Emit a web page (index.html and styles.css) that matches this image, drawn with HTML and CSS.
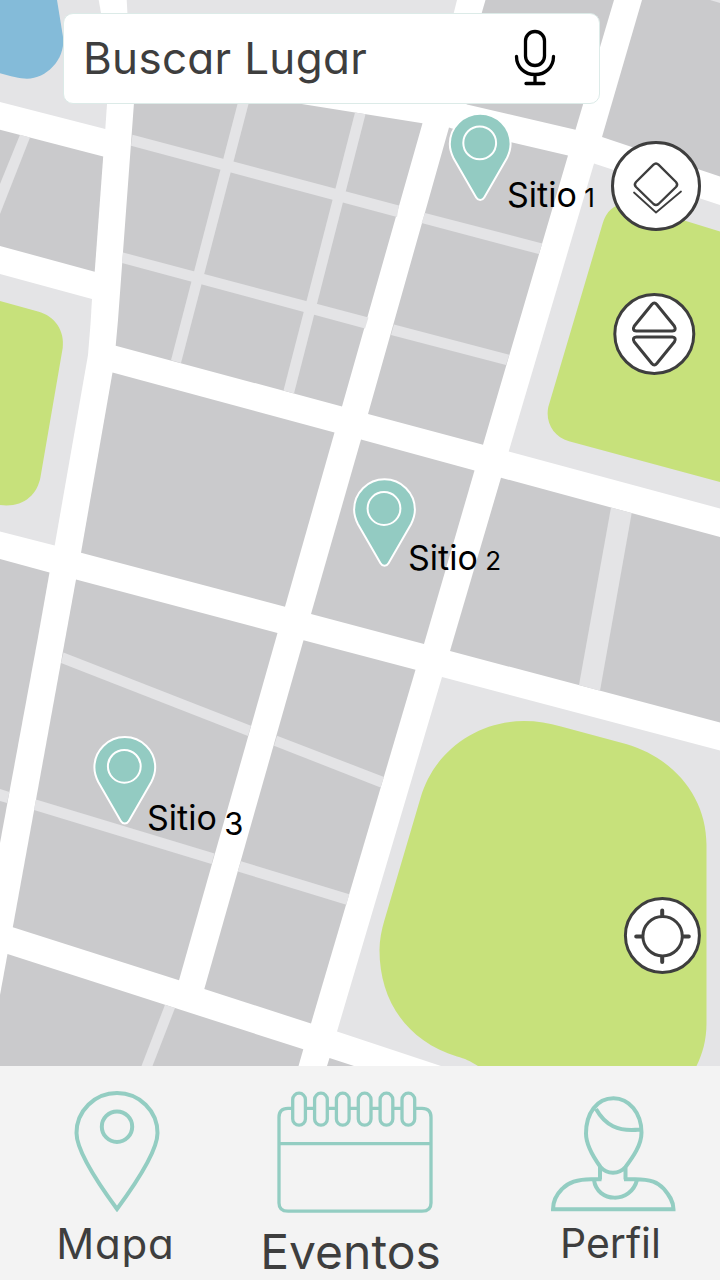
FILE: index.html
```html
<!DOCTYPE html>
<html lang="es">
<head>
<meta charset="utf-8">
<title>Mapa</title>
<link rel="stylesheet" href="styles.css">
</head>
<body>
<main class="map">
  <svg class="map-canvas" width="720" height="1066" viewBox="0 0 720 1066" aria-hidden="true">
    <g class="zone">
      <path d="M0 0H98.7L101 13 107 104 105.3 129 0 102Z"/>
      <path d="M126.7 0H457L453 16V60H130Z"/>
      <path d="M0 274 92 299 90.5 324 88 355 54.7 545.5 0 531.5Z"/>
      <path d="M594 163.5 720 205V508.5L508.7 451.5Z"/>
      <path d="M442 677 720 750.5V1066H441L337 1031.5Z"/>
    </g>
    <g class="block">
      <path d="M0 129.7 103.2 156.5 94.7 271.7 0 246Z"/>
      <path d="M134.2 100H280L297 103.3 422.5 123.3 342 406.5 115.7 345.7 118 320Z"/>
      <path d="M449 127.5 452 128.5 568 155.5 483 444.7 368 414Z"/>
      <path d="M485.5 0H614L575.5 129.7 467 104.5 457 98Z"/>
      <path d="M642 0H720V176.5L602 137Z"/>
      <path d="M112.5 372.5 334.5 432.5 285 606.7 81 552.8Z"/>
      <path d="M361 439.5 474.5 470.5 424 644 311 614Z"/>
      <path d="M501 477.7 720 537V722.5L450 651Z"/>
      <path d="M0 559 49.5 572.5 37.5 640 0 843Z"/>
      <path d="M76 579.5 277.5 633 179 980.3 12.8 927.3Z"/>
      <path d="M303.5 640.3 415.5 669.7 311 1023.5 204.3 989Z"/>
      <path d="M7.5 954 303.3 1049.3 298.5 1066H0V995Z"/>
      <path d="M329.5 1058 354 1066H327Z"/>
    </g>
    <g class="zone">
      <path d="M20 134.8 30 137.6 0 214V184Z"/>
      <path d="M132.5 134.8 399 205.5 397 217 131 145.7Z"/>
      <path d="M123 252.5 368.5 317.5 365 328.5 122 263Z"/>
      <path d="M237.5 104H248.5L181 363 171 360.3Z"/>
      <path d="M355 112.5 365.5 114.3 294 393.5 283.5 390.6Z"/>
      <path d="M425 213 542.3 243.5 538.7 254 421.5 223Z"/>
      <path d="M394 324.5 509.3 354.7 506 365 391 335Z"/>
      <path d="M611 507.5 631.7 513 600 690.7 579 685Z"/>
      <path d="M0 789 9.5 792 7 803 0 801Z"/>
      <path d="M63.5 652.5 251 725.7 248 736 61 663Z"/>
      <path d="M36 799.5 214.5 853.5 211.5 864 34 810Z"/>
      <path d="M277 735.7 384 777 380.5 787.5 274 745.7Z"/>
      <path d="M241 861.3 349.3 894.3 346.3 904.7 237.7 871.5Z"/>
      <path d="M165 1004.7 175 1008 152.5 1066H141.5Z"/>
      <path d="M710 0H720V3Z"/>
    </g>
    <g class="park">
      <path d="M0 301 38 311.500C55 316 65 331 62.700 348L40.500 477C37 496 22 508 0 505Z"/>
      <path d="M602.500 224C607 208 618 201 634 205L720 231.500V482L569 441.300C554 437 545 423 548.300 407Z"/>
      <path d="M420.500 798C434 751 477 721 524 721 537 721 549 723 561 726.500L626 744C674 758 706.500 797 706.500 845V1023C706.500 1040 702.500 1054 696.500 1066H478C470 1061 465 1058.500 457 1056.500 407 1041 379.500 1001 379.500 950 379.500 940 381.500 930 384.500 920Z"/>
    </g>
    <path class="water" d="M0 0H57L63.200 38C65 60 46 78.700 27 78.700 20 78.700 10 76 0 73.300Z"/>
    <defs>
      <g id="pin">
        <path d="M0-1.500C-1.800-1.500-3-2.300-4-4L-26.500-43C-29-48-30.400-52-30.400-57.500A30.400 30.400 0 0 1 30.400-57.500C30.400-52 29-48 26.500-43L4-4C3-2.300 1.800-1.500 0-1.500Z"/>
        <circle cx="-.5" cy="-58.700" r="16.400"/>
      </g>
    </defs>
    <g class="pins">
      <use href="#pin" x="480.200" y="201.600"/>
      <use href="#pin" x="384.500" y="567.200"/>
      <use href="#pin" x="124.800" y="825"/>
    </g>
  </svg>
  <span class="site site-one">Sitio <span class="num">1</span></span>
  <span class="site site-two">Sitio <span class="num">2</span></span>
  <span class="site site-three">Sitio <span class="num num-low">3</span></span>

  <div class="search">
    <span class="search-text">Buscar Lugar</span>
    <svg class="mic" width="44" height="60" viewBox="0 0 44 60">
      <rect x="12.500" y="2.500" width="19" height="34" rx="9.500"/>
      <path d="M3.500 27.500C3.500 38 11.500 45.500 22 45.500S40.500 38 40.500 27.500M22 46V54M13 54.500H31"/>
    </svg>
  </div>

  <svg class="control layers" width="92" height="92" viewBox="0 0 92 92">
    <circle class="disc" cx="46" cy="46" r="43.500"/>
    <path class="medium" d="M43.500 24.700Q46 22.300 48.500 24.700L66 42Q68.300 44.500 66 47L48.500 64Q46 66.200 43.500 64L26 47Q23.700 44.500 26 42Z"/>
    <path class="thin" d="M24 52.500 46 72.500 71 51.500"/>
  </svg>
  <svg class="control tilt" width="84" height="84" viewBox="0 0 84 84">
    <circle class="disc" cx="42.300" cy="42" r="39.500"/>
    <path d="M39.800 12.500Q42.300 9.500 44.800 12.500L62.300 34Q64.800 38.700 60.300 39H24.300Q19.800 38.700 22.300 34Z"/>
    <path d="M39.800 71.500Q42.300 74.500 44.800 71.500L62.300 50Q64.800 45.300 60.300 45H24.300Q19.800 45.300 22.300 50Z"/>
  </svg>
  <svg class="control locate" width="80" height="80" viewBox="0 0 80 80">
    <circle class="disc" cx="40.400" cy="40.500" r="37"/>
    <circle cx="40.600" cy="41.200" r="19.700"/>
    <path class="cross" d="M40.200 15.500V20M40.200 62V67M14.200 41.500H20M61 41.500H66.800"/>
  </svg>
</main>

<nav class="tabs">
  <a class="tab">
    <svg width="90" height="126" viewBox="0 0 90 126">
      <path d="M45 121C31 102 4.500 65 4.500 45A40.500 40 0 0 1 85.500 45C85.500 65 59 102 45 121Z"/>
      <circle cx="45" cy="38.700" r="15.200"/>
    </svg>
    <span class="label label-map">Mapa</span>
  </a>
  <a class="tab tab-events">
    <svg class="thin-icon" width="160" height="126" viewBox="0 0 160 126">
      <path d="M17 20.300H13Q4 20.300 4 29.300V115Q4 123.200 13 123.200H147Q156 123.200 156 115V29.300Q156 20.300 147 20.300H139M30.500 20.300H39.500M52.300 20.300H61.300M74.100 20.300H83.100M95.900 20.300H104.900M117.700 20.300H126.700M4 55.700H156"/>
      <rect x="17.700" y="5.200" width="12.700" height="32" rx="6.300"/>
      <rect x="39.600" y="5.200" width="12.700" height="32" rx="6.300"/>
      <rect x="61.400" y="5.200" width="12.700" height="32" rx="6.300"/>
      <rect x="83.300" y="5.200" width="12.700" height="32" rx="6.300"/>
      <rect x="105.100" y="5.200" width="12.700" height="32" rx="6.300"/>
      <rect x="127" y="5.200" width="12.700" height="32" rx="6.300"/>
    </svg>
    <span class="label label-events">Eventos</span>
  </a>
  <a class="tab tab-profile">
    <svg width="130" height="126" viewBox="0 0 130 126">
      <path d="M65.500 10.200C49 10.200 38 25 38 45.500 38 57 46 70 52.500 79 59 86.500 71 86.500 77.500 79 85 69 93.500 57 93.500 44.500 93.500 25 81 10.200 65.500 10.200ZM48 21C57 37 70 44 91.500 41.500M52 78V91.500M77.500 78V91.500M53.500 91.200H43C28 91.200 20 94.500 14 101 8 107 5 113 5 121.200H125.500C125.500 113 121 107 116 101 110 94.500 103 91.200 87 91.200H76M46 92C49 115 83 116 89 92"/>
    </svg>
    <span class="label label-profile">Perfil</span>
  </a>
</nav>
</body>
</html>
```
FILE: styles.css
```css
* { box-sizing: border-box; }

body {
  margin: 0;
  width: 720px;
  height: 1280px;
  overflow: hidden;
  font-family: Inter, "Open Sans", sans-serif;
  font-feature-settings: "cv11";
  color: #3e3e3e;
}

.map {
  position: relative;
  height: 1066px;
  overflow: hidden;
  background: #fff;
}

.map-canvas { display: block; }
.zone { fill: #e4e4e6; }
.block { fill: #cacacc; }
.park { fill: #c7e17b; }
.water { fill: #84bbd9; }

.pins {
  fill: #93cbc2;
  stroke: #fff;
  stroke-width: 2;
}

.site {
  position: absolute;
  color: #000;
  font-size: 34px;
  line-height: 40px;
  word-spacing: -2px;
  white-space: nowrap;
}
.site-one { left: 507px; top: 175px; }
.site-two { left: 408px; top: 538px; }
.site-three { left: 147px; top: 798px; }
.num { font-size: 26px; }
.num-low {
  font-size: 31px;
  position: relative;
  top: 5px;
}

.search {
  position: absolute;
  left: 63px;
  top: 13px;
  width: 537px;
  height: 91px;
  padding: 0 42px 2px 19px;
  display: flex;
  align-items: center;
  justify-content: space-between;
  background: #fff;
  border: 1px solid #dcebe8;
  border-radius: 10px;
}
.search-text {
  font-size: 44px;
  line-height: 60px;
  letter-spacing: 0.3px;
  white-space: nowrap;
}
.mic {
  position: relative;
  top: 1px;
  fill: none;
  stroke: #000;
  stroke-width: 3.3;
  stroke-linecap: round;
}

.control {
  position: absolute;
  fill: none;
  stroke: #3e3e3e;
  stroke-width: 3;
  stroke-linecap: round;
  stroke-linejoin: round;
}
.disc { fill: #fff; }
.medium { stroke-width: 2.4; }
.thin { stroke-width: 1.8; }
.cross { stroke-width: 4; }
.layers { left: 610px; top: 140px; }
.tilt { left: 612px; top: 292px; }
.locate { left: 622px; top: 895px; }

.tabs {
  height: 214px;
  display: grid;
  grid-template-columns: 233px 244px 243px;
  background: #f3f3f3;
}
.tab {
  display: flex;
  flex-direction: column;
  align-items: center;
  padding-top: 22px;
}
.tab svg {
  fill: none;
  stroke: #93cdc2;
  stroke-width: 4;
}
.tab .thin-icon { stroke-width: 3.3; }
.tab-profile { padding-left: 28px; }
.label {
  font-size: 42px;
  line-height: 60px;
  white-space: nowrap;
}
.label-map {
  letter-spacing: 0.8px;
  margin-right: 2px;
}
.label-events {
  font-size: 48px;
  margin: 8px 9px 0 0;
}
.label-profile {
  font-size: 41px;
  margin: -1px 4px 0 0;
}
```
